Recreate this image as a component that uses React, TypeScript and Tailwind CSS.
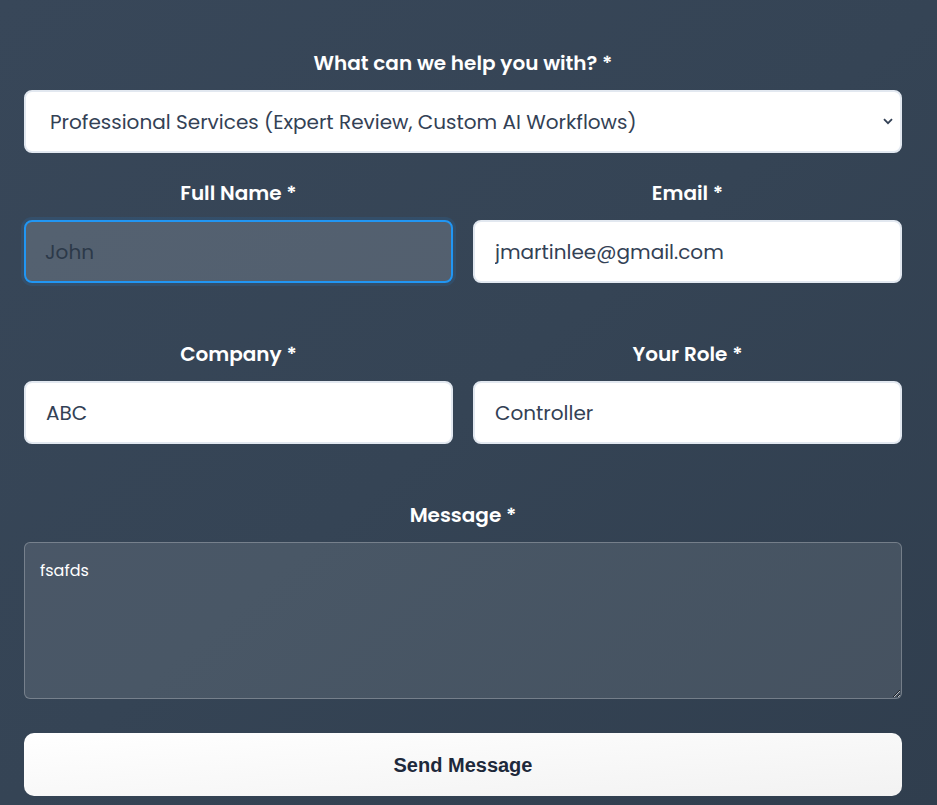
import React, { useState } from 'react';

const Label: React.FC<{ htmlFor: string; children: React.ReactNode }> = ({ htmlFor, children }) => (
  <label htmlFor={htmlFor} className="block text-center text-[20px] leading-[28px] font-semibold text-white mb-[13px]">
    {children}
  </label>
);

export default function App() {
  const [service, setService] = useState('pro');
  const [name, setName] = useState('John');
  const [email, setEmail] = useState('jmartinlee@gmail.com');
  const [company, setCompany] = useState('ABC');
  const [role, setRole] = useState('Controller');
  const [message, setMessage] = useState('fsafds');

  const inputCls =
    'w-full h-[63px] px-[20px] rounded-[8px] border-2 border-[#e2e8f0] bg-white text-[20px] text-[#334155] outline-none';

  return (
    <div className="min-h-[805px] w-full bg-gradient-to-br from-[#384759] via-[#354455] to-[#303e4e] px-[24px] pt-[49px] pb-[10px] font-['Poppins','Open_Sans',sans-serif]">
      <form className="w-[878px]" onSubmit={(e) => e.preventDefault()}>
        <div>
          <Label htmlFor="service">What can we help you with? *</Label>
          <div className="relative">
            <select
              id="service"
              value={service}
              onChange={(e) => setService(e.target.value)}
              className="w-full h-[63px] appearance-none pl-[24px] pr-[40px] rounded-[8px] border-2 border-[#e2e8f0] bg-white text-[20px] text-[#334155] outline-none"
            >
              <option value="pro">Professional Services (Expert Review, Custom AI Workflows)</option>
              <option value="platform">Platform</option>
            </select>
            <svg
              className="absolute right-[9px] top-[28px] pointer-events-none"
              width="10"
              height="7"
              viewBox="0 0 10 7"
              fill="none"
            >
              <path d="M1 1.2 L5 5.2 L9 1.2" stroke="#334155" strokeWidth="1.8" />
            </svg>
          </div>
        </div>

        <div className="grid grid-cols-2 gap-x-[20px] mt-[26px]">
          <div>
            <Label htmlFor="name">Full Name *</Label>
            <input
              id="name"
              value={name}
              onChange={(e) => setName(e.target.value)}
              className="w-full h-[63px] pl-[19px] pr-[20px] rounded-[8px] border-2 border-[#2196f3] bg-white/15 text-[20px] text-[#2c3949] outline-none shadow-[0_0_0_3px_rgba(33,150,243,0.12)]"
            />
          </div>
          <div>
            <Label htmlFor="email">Email *</Label>
            <input id="email" value={email} onChange={(e) => setEmail(e.target.value)} className={inputCls} />
          </div>
        </div>

        <div className="grid grid-cols-2 gap-x-[20px] mt-[57px]">
          <div>
            <Label htmlFor="company">Company *</Label>
            <input id="company" value={company} onChange={(e) => setCompany(e.target.value)} className={inputCls} />
          </div>
          <div>
            <Label htmlFor="role">Your Role *</Label>
            <input id="role" value={role} onChange={(e) => setRole(e.target.value)} className={inputCls} />
          </div>
        </div>

        <div className="mt-[57px]">
          <Label htmlFor="message">Message *</Label>
          <textarea
            id="message"
            value={message}
            onChange={(e) => setMessage(e.target.value)}
            className="block w-full h-[157px] px-[15px] py-[16px] rounded-[6px] border border-white/25 bg-white/10 text-[16px] leading-[24px] text-white outline-none"
          />
        </div>

        <button
          type="submit"
          className="mt-[34px] w-full h-[63px] rounded-[10px] bg-gradient-to-br from-white to-[#f2f2f2] text-[20px] font-bold text-[#1e293b] font-['Liberation_Sans',Arial,sans-serif]"
        >
          Send Message
        </button>
      </form>
    </div>
  );
}
